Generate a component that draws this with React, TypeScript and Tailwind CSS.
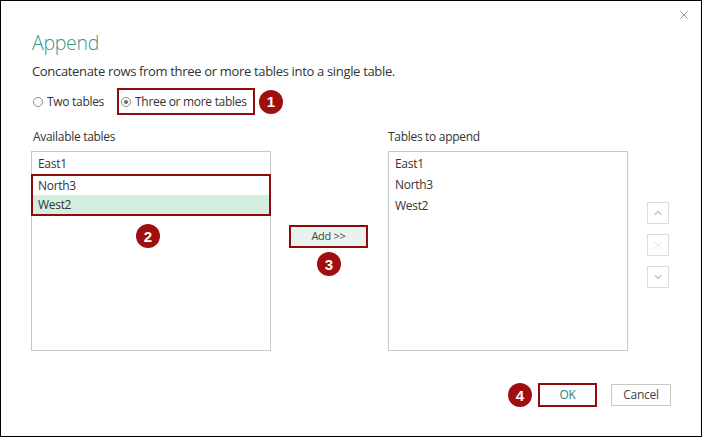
import { ChevronUp, ChevronDown, X } from 'lucide-react';

const font = { fontFamily: '"Open Sans", "Noto Sans", sans-serif' };

function Badge({ n, className = '' }: { n: number; className?: string }) {
  return (
    <div
      className={`w-[24px] h-[24px] rounded-full bg-[#a00f0f] text-white flex items-center justify-center text-[15px] font-bold leading-none tracking-normal ${className}`}
      style={{ fontFamily: '"Liberation Sans", Arial, sans-serif' }}
    >
      {n}
    </div>
  );
}

function Radio({ checked }: { checked?: boolean }) {
  return (
    <span className="w-[10px] h-[10px] rounded-full border border-[#8a8a8a] bg-white flex items-center justify-center shrink-0">
      {checked && <span className="w-[4px] h-[4px] rounded-full bg-[#6a6a6a]" />}
    </span>
  );
}

function SideButton({ children }: { children: React.ReactNode }) {
  return (
    <div className="w-[22px] h-[22px] border border-[#dcdcdc] flex items-center justify-center text-[#c4c4c4]">
      {children}
    </div>
  );
}

export default function App() {
  const tables = ['East1', 'North3', 'West2'];

  return (
    <div
      className="relative w-[702px] h-[437px] bg-white border border-black text-[#333] text-[12px] tracking-[-0.3px] overflow-hidden"
      style={font}
    >
      {/* close */}
      <div className="absolute right-[10px] top-[7px] text-[#777]">
        <X className="w-[14px] h-[14px]" strokeWidth={1.3} />
      </div>

      <div className="pl-[30px] pr-[30px] pt-[28px]">
        <h1 className="text-[19.5px] font-light leading-[28px] text-[#3a9487] pl-[1px]">Append</h1>

        <p className="mt-[5px] text-[13px] tracking-[-0.33px] leading-[18px] text-[#333] pl-[1px]">
          Concatenate rows from three or more tables into a single table.
        </p>

        {/* table count */}
        <div className="mt-[8px] h-[27px] flex items-center whitespace-nowrap">
          <label className="flex items-center gap-[4px] pl-[2px]">
            <Radio />
            Two tables
          </label>
          <label className="ml-[13px] h-[27px] w-[138px] border-2 border-[#8f0c0c] flex items-center gap-[4px] pl-[2px]">
            <Radio checked />
            Three or more tables
          </label>
          <Badge n={1} className="ml-[4px]" />
        </div>

        {/* lists */}
        <div className="mt-[13px] flex">
          <div className="w-[240px]">
            <div className="h-[23px] leading-[17px] pl-[2px]">Available tables</div>
            <div className="relative h-[200px] border border-[#c8c8c8]">
              <div className="pt-[1px] px-[1px]">
                <div className="h-[21px] flex items-center pl-[5px]">East1</div>
                <div className="h-[42px] -mx-[2px] border-2 border-[#8f0c0c]">
                  <div className="h-[19px] flex items-center pl-[5px]">North3</div>
                  <div className="h-[19px] flex items-center pl-[5px] bg-[#d4eee0]">West2</div>
                </div>
              </div>
              <Badge n={2} className="absolute left-[104px] top-[72px]" />
            </div>
          </div>

          <div className="relative w-[117px]">
            <button className="absolute left-[18px] top-[97px] w-[79px] h-[23px] border-2 border-[#8f0c0c] bg-[#e8f3ed] text-[11px] text-[#444] flex items-center justify-center">
              Add &gt;&gt;
            </button>
            <Badge n={3} className="absolute left-[46px] top-[124px]" />
          </div>

          <div className="w-[240px]">
            <div className="h-[23px] leading-[17px]">Tables to append</div>
            <div className="h-[200px] border border-[#c8c8c8] pt-[1px] px-[1px]">
              {tables.map((t) => (
                <div key={t} className="h-[21px] flex items-center pl-[5px]">
                  {t}
                </div>
              ))}
            </div>
          </div>

          <div className="ml-[19px] pt-[74px] flex flex-col gap-[10px]">
            <SideButton>
              <ChevronUp className="w-[12px] h-[12px]" strokeWidth={2.5} />
            </SideButton>
            <SideButton>
              <X className="w-[14px] h-[14px] text-[#e2e2e2]" strokeWidth={1.5} />
            </SideButton>
            <SideButton>
              <ChevronDown className="w-[12px] h-[12px]" strokeWidth={2.5} />
            </SideButton>
          </div>
        </div>

        {/* footer */}
        <div className="mt-[32px] flex items-center justify-end">
          <Badge n={4} className="mr-[6px]" />
          <button className="w-[59px] h-[24px] border-2 border-[#8f0c0c] text-[#2a7f78] flex items-center justify-center">
            OK
          </button>
          <button className="ml-[14px] w-[60px] h-[22px] border border-[#c8c8c8] text-[#444] flex items-center justify-center">
            Cancel
          </button>
        </div>
      </div>
    </div>
  );
}
